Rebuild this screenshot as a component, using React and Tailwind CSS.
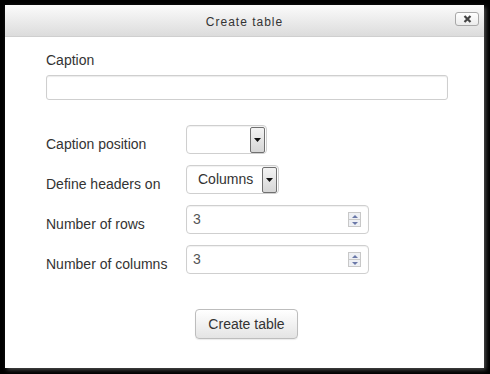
import React from 'react';

const font = { fontFamily: '"Liberation Sans", Arial, sans-serif' };

function SelectArrow() {
    return (
        <span className="flex h-[26px] w-[15px] items-center justify-center rounded-[2px] border border-[#707070] bg-gradient-to-b from-[#f4f4f4] to-[#d6d6d6]">
            <svg width="7" height="4" viewBox="0 0 7 4">
                <path d="M0 0h7L3.5 4z" fill="#111" />
            </svg>
        </span>
    );
}

function FakeSelect({ value, width }) {
    return (
        <div className={`flex h-[29px] ${width} items-center justify-between rounded-[4px] border border-[#cfcfcf] bg-white pl-[11px] pr-[1px] shadow-[inset_0_1px_1px_rgba(0,0,0,0.06)]`}>
            <span className="text-[14px] text-[#333]">{value}</span>
            <SelectArrow />
        </div>
    );
}

function Spinner() {
    return (
        <span className="flex h-[15px] w-[13px] flex-col border border-[#c8c8c8] bg-[#eef0f4]">
            <span className="flex flex-1 items-center justify-center border-b border-[#c8c8c8]">
                <svg width="6" height="3" viewBox="0 0 6 3">
                    <path d="M0 3h6L3 0z" fill="#6a78a8" />
                </svg>
            </span>
            <span className="flex flex-1 items-center justify-center">
                <svg width="6" height="3" viewBox="0 0 6 3">
                    <path d="M0 0h6L3 3z" fill="#6a78a8" />
                </svg>
            </span>
        </span>
    );
}

function NumberInput({ value }) {
    return (
        <div className="flex h-[29px] w-[183px] items-center justify-between rounded-[4px] border border-[#cfcfcf] bg-white pl-[6px] pr-[7px] shadow-[inset_0_1px_1px_rgba(0,0,0,0.06)]">
            <span className="text-[14px] text-[#555]">{value}</span>
            <Spinner />
        </div>
    );
}

function Row({ label, children }) {
    return (
        <div className="flex items-start">
            <span className="w-[140px] pt-[9px] text-[14px] leading-[20px] text-[#333]">{label}</span>
            {children}
        </div>
    );
}

export default function App() {
    return (
        <div className="h-[374px] w-[490px] bg-black pl-[5px] pt-[5px]" style={font}>
            <div className="flex h-[363px] w-[479px] flex-col bg-white shadow-[2px_2px_4px_rgba(120,120,120,0.6)]">
                <div className="relative flex h-[32px] items-center justify-center border-b border-[#cfcfcf] bg-gradient-to-b from-[#fbfbfb] to-[#dcdcdc] pt-[3px]">
                    <span className="text-[12px] tracking-[1px] text-[#333]">Create table</span>
                    <button className="absolute right-[5px] top-[7px] flex h-[14px] w-[24px] items-center justify-center rounded-[3px] border border-[#a8a8a8] bg-gradient-to-b from-white to-[#ececec]">
                        <svg width="9" height="8" viewBox="0 0 9 8">
                            <path d="M1.5 1l6 6M7.5 1l-6 6" stroke="#444" strokeWidth="2.2" />
                        </svg>
                    </button>
                </div>

                <div className="flex flex-col pl-[41px] pr-[36px] pt-[13px]">
                    <span className="text-[14px] leading-[20px] text-[#333]">Caption</span>
                    <div className="mt-[5px] h-[25px] w-[402px] rounded-[3px] border border-[#cfcfcf] bg-white shadow-[inset_0_1px_1px_rgba(0,0,0,0.08)]" />

                    <div className="mt-[25px] flex flex-col gap-[11px]">
                        <Row label="Caption position">
                            <FakeSelect value="" width="w-[81px]" />
                        </Row>
                        <Row label="Define headers on">
                            <FakeSelect value="Columns" width="w-[93px]" />
                        </Row>
                        <Row label="Number of rows">
                            <NumberInput value="3" />
                        </Row>
                        <Row label="Number of columns">
                            <NumberInput value="3" />
                        </Row>
                    </div>

                    <div className="mt-[35px] pl-[149px]">
                        <button className="h-[30px] w-[103px] rounded-[4px] border border-[#bdbdbd] bg-gradient-to-b from-white to-[#e4e4e4] text-[14px] text-[#333] shadow-[0_1px_1px_rgba(0,0,0,0.08)]">
                            Create table
                        </button>
                    </div>
                </div>
            </div>
        </div>
    );
}
